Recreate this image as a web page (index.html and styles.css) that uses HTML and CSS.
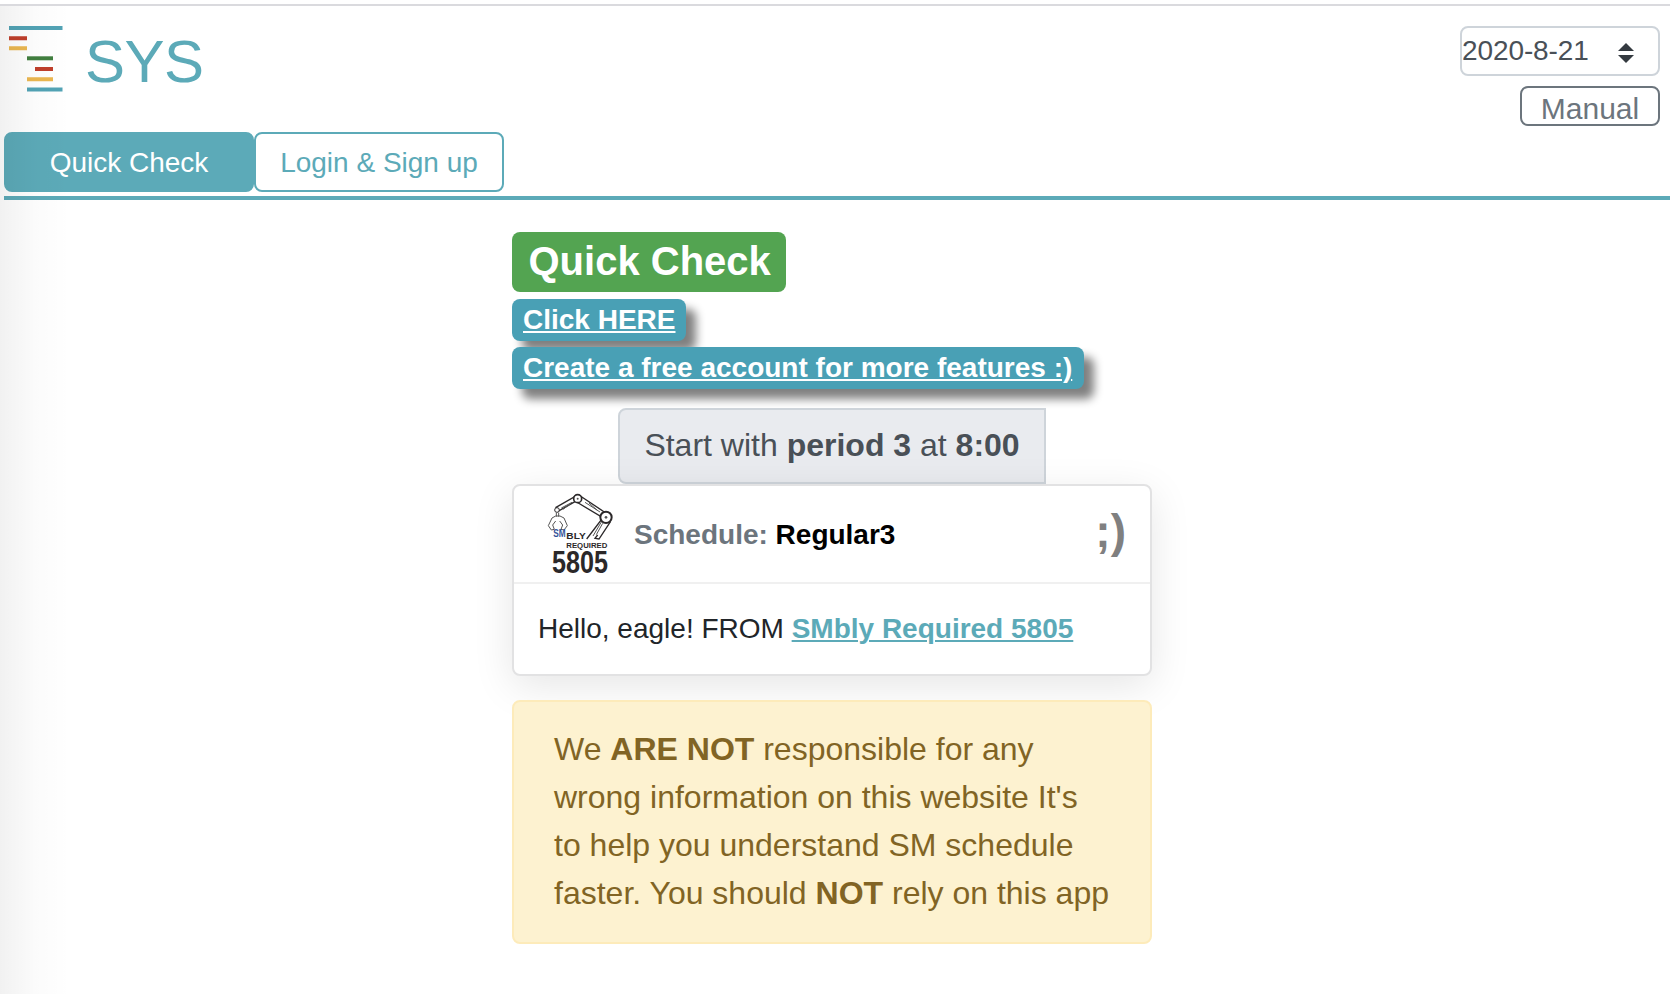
FILE: index.html
```html
<!DOCTYPE html>
<html lang="en">
<head>
<meta charset="utf-8">
<title>SYS</title>
<link rel="stylesheet" href="styles.css">
</head>
<body>
<header class="header">
  <a class="brand">
    <svg class="brand-logo" width="54" height="66" viewBox="0 0 54 66">
      <path fill="#52a3b5" d="M0 0h53.5v4H0zM18 61.5h35.5v4H18z"/>
      <path fill="#c03f2b" d="M0 10.3h18v4H0zM26 41h18v4H26z"/>
      <path fill="#ebb750" d="M0 20.3h18v4H0zM18 51.3h26v4H18z"/>
      <path fill="#417f3f" d="M18 30.3h26v4H18z"/>
    </svg>
    <span class="brand-name">SYS</span>
  </a>
  <div class="tools">
    <div class="date-select"><span>2020-8-21</span>
      <svg width="16" height="20" viewBox="0 0 16 20"><path fill="#343a40" d="M0 8 8 0l8 8zM0 12h16l-8 8z"/></svg>
    </div>
    <button class="manual">Manual</button>
  </div>
</header>
<nav class="tabs">
  <a class="tab tab-active">Quick Check</a>
  <a class="tab">Login &amp; Sign up</a>
</nav>
<main class="content">
  <h1 class="title">Quick Check</h1>
  <a class="badge badge-short">Click HERE</a>
  <a class="badge badge-wide">Create a free account for more features :)</a>
  <div class="start">Start with&nbsp;<b>period 3</b>&nbsp;at&nbsp;<b>8:00</b></div>
  <section class="card">
    <div class="card-header">
      <svg class="team-logo" width="72" height="84" viewBox="42 36 216 252">
        <g fill="#fff" stroke="#2b2829" stroke-width="4">
          <path d="M78 82 134 50l6 12-56 32z"/>
          <path d="M151 48 226 98l-8 15-73-44z"/>
          <path d="M170 177 215 118l25 9-33 50-12-2 8-10"/>
          <circle cx="81" cy="90" r="7" stroke-width="3"/>
          <circle cx="143" cy="56" r="12" stroke-width="5"/>
          <circle cx="228" cy="112" r="17" stroke-width="6"/>
        </g>
        <g fill="none" stroke="#555" stroke-width="3">
          <path d="m94 84 32-17M99 88l24-18M165 67l45 29M177 69l25 22M189 168l25-42M199 164l19-34"/>
          <path d="M79 98v12M86 98v12M66 114l11-6h13l12 6 10 23-10 13-9-2 5-13-9-12M66 114l-11 23 9 13 9-2-5-13 9-12"/>
        </g>
        <circle cx="143" cy="56" r="3" fill="#555"/><circle cx="228" cy="112" r="4" fill="#555"/>
        <g class="team-text">
          <text class="team-sm" x="70" y="171" font-size="34" textLength="37" lengthAdjust="spacingAndGlyphs">SM</text>
          <text x="109" y="178" font-size="29" textLength="58" lengthAdjust="spacingAndGlyphs">BLY</text>
          <text x="109" y="204" font-size="23" textLength="123" lengthAdjust="spacingAndGlyphs">REQUIRED</text>
          <text x="66" y="280" font-size="95" textLength="168" lengthAdjust="spacingAndGlyphs">5805</text>
        </g>
      </svg>
      <div class="schedule">Schedule: <span>Regular3</span></div>
      <div class="wink">;)</div>
    </div>
    <div class="card-body">Hello, eagle! FROM <a>SMbly Required 5805</a></div>
  </section>
  <div class="alert">We <b>ARE NOT</b> responsible for any<br>wrong information on this website It's<br>to help you understand SM schedule<br>faster. You should <b>NOT</b> rely on this app</div>
</main>
<div class="edge-shade"></div>
</body>
</html>
```
FILE: styles.css
```css
* { box-sizing: border-box; }
body {
  margin: 0;
  height: 994px;
  overflow: hidden;
  position: relative;
  padding-top: 4px;
  background: #fff;
  color: #212529;
  font-family: "Liberation Sans", Arial, sans-serif;
  font-size: 28px;
}
.header {
  height: 128px;
  border-top: 2px solid #dadade;
  padding: 20px 10px 0 9px;
  display: flex;
  justify-content: space-between;
  align-items: flex-start;
}
.brand { display: flex; gap: 22px; color: #5caab8; }
.brand-name { font-size: 60px; line-height: 72px; letter-spacing: -0.5px; }
.tools { display: flex; flex-direction: column; align-items: flex-end; gap: 10px; }
.date-select {
  width: 200px;
  height: 50px;
  border: 2px solid #ced4da;
  border-radius: 8px;
  padding: 0 24px 0 0;
  display: flex;
  justify-content: space-between;
  align-items: center;
  color: #495057;
  line-height: 46px;
  letter-spacing: -0.1px;
}
.date-select svg { margin-top: 3px; }
.manual {
  width: 140px;
  height: 40px;
  border: 2px solid #6c757d;
  border-radius: 8px;
  padding: 3px 0 0;
  background: none;
  color: #6c757d;
  font: 30px/36px "Liberation Sans", Arial, sans-serif;
}
.tabs {
  height: 68px;
  margin-left: 4px;
  border-bottom: 4px solid #5caab8;
  display: flex;
}
.tab {
  width: 250px;
  height: 60px;
  border: 2px solid #5caab8;
  border-radius: 8px;
  color: #5caab8;
  line-height: 58px;
  text-align: center;
}
.tab-active { background: #5caab8; color: #fff; }
.content {
  width: 640px;
  margin: 32px 0 0 512px;
  display: flex;
  flex-direction: column;
  align-items: flex-start;
}
.title {
  margin: 0;
  height: 60px;
  padding: 0 15px 0 16.5px;
  border-radius: 8px;
  background: #53a451;
  color: #fff;
  font-size: 40px;
  line-height: 58px;
}
.badge {
  height: 42px;
  margin-top: 7px;
  padding: 0 11px;
  border-radius: 8px;
  background: #49a0b5;
  box-shadow: 10px 10px 10px #808080;
  color: #fff;
  font-weight: bold;
  line-height: 42px;
  text-decoration: underline;
  text-decoration-thickness: 2px;
  text-underline-offset: 2px;
  white-space: nowrap;
}
.badge-short { width: 174px; }
.badge-wide { width: 572px; margin-top: 6px; }
.start {
  width: 428px;
  height: 76px;
  margin: 19px 0 0 106px;
  border: 2px solid #ced4da;
  border-radius: 8px 0 0 8px;
  display: flex;
  justify-content: center;
  background: #e9ebef;
  color: #495057;
  font-size: 32px;
  line-height: 71px;
  white-space: nowrap;
}
.card {
  width: 640px;
  height: 192px;
  border: 2px solid #e2e2e3;
  border-radius: 8px;
  background: #fff;
  box-shadow: 0 10px 40px rgba(0, 0, 0, 0.1);
}
.card-header {
  height: 98px;
  padding: 0 24px 0 30px;
  border-bottom: 2px solid #f0f0f0;
  display: flex;
  align-items: center;
  font-weight: bold;
}
.team-text { font-family: "Liberation Sans", Arial, sans-serif; font-weight: bold; fill: #2b2829; }
.team-text .team-sm { fill: #34549a; }
.schedule { margin: 2px 0 0 18px; color: #6c757d; }
.schedule span { color: #000; }
.wink { margin-left: auto; color: #808080; font-size: 46px; line-height: 90px; height: 96px; }
.card-body { padding-left: 24px; line-height: 90px; white-space: nowrap; }
.card-body a {
  color: #5caab8;
  font-weight: bold;
  text-decoration: underline;
  text-decoration-thickness: 2px;
  text-underline-offset: 2px;
}
.alert {
  position: relative;
  width: 640px;
  height: 244px;
  margin-top: 24px;
  padding: 23px 40px;
  border: 2px solid #fdebba;
  border-radius: 8px;
  background: #fdf2d0;
  color: #816424;
  font-size: 32px;
  line-height: 48px;
  white-space: nowrap;
}
.edge-shade {
  position: absolute;
  top: 6px;
  left: 0;
  width: 70px;
  bottom: 0;
  background: linear-gradient(to right, rgba(0, 0, 0, 0.055), rgba(0, 0, 0, 0.015) 50%, transparent);
}
```
